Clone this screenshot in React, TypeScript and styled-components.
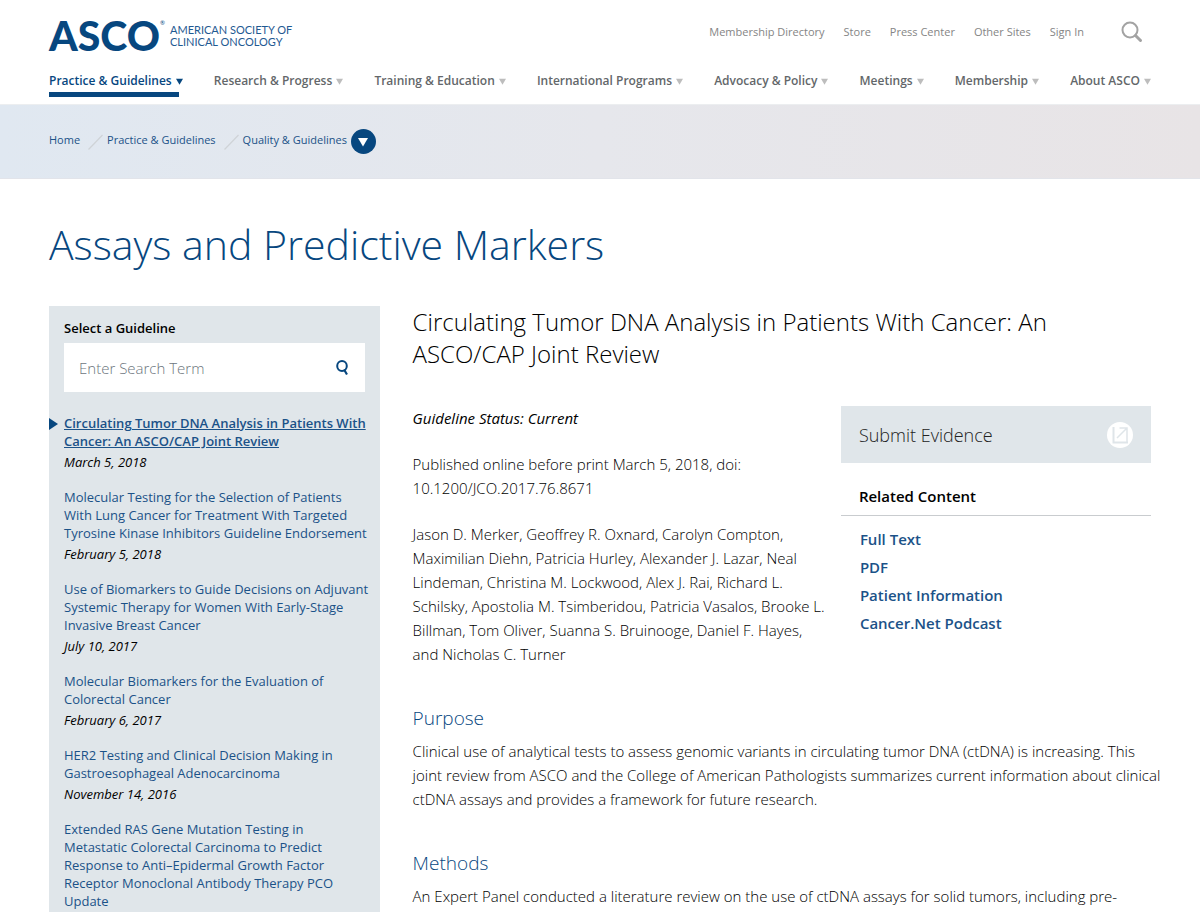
import React from "react";
import styled, { createGlobalStyle } from "styled-components";

const navy = "#07477f";
const link = "#1b5288";

const GlobalStyle = createGlobalStyle`
  *, *::before, *::after { box-sizing: border-box; }
  body {
    margin: 0;
    background: #fff;
    color: #000;
    font-family: "Open Sans", "Noto Sans", sans-serif;
  }
  h1, h2, h3, p, ul, ol { margin: 0; padding: 0; font-weight: 300; }
  ul, ol { list-style: none; }
  a { text-decoration: none; color: inherit; }
  button { border: 0; padding: 0; background: none; font: inherit; cursor: pointer; }
`;

const Header = styled.header`
  padding: 16px 49px 7px;
  border-bottom: 1px solid #eceef0;
`;

const TopRow = styled.div`
  display: flex;
  justify-content: space-between;
  align-items: flex-start;
`;

const Logo = styled.a`
  display: flex;
  align-items: center;
  gap: 5px;
  height: 40px;
  color: ${navy};
  font-family: Lato, "Open Sans", sans-serif;
`;

const LogoMark = styled.span`
  display: flex;
  align-items: flex-start;
  font-size: 41px;
  line-height: 40px;
  font-weight: 900;
`;

const Registered = styled.sup`
  font-size: 6px;
  line-height: 14px;
  font-weight: 400;
`;

const LogoName = styled.span`
  font-size: 11px;
  line-height: 12px;
  color: #1f5a92;
`;

const Utility = styled.nav`
  display: flex;
  align-items: center;
  gap: 19px;
  height: 32px;
  padding-right: 8px;
  font-size: 11px;
  line-height: 16px;
  color: #858585;
`;

const SearchToggle = styled.button`
  display: flex;
  margin-left: 18px;
  color: #a3a3a3;
`;

const MainNav = styled.ul`
  display: flex;
  justify-content: space-between;
  margin-top: 16px;
  font-size: 12px;
  line-height: 18px;
  font-weight: 600;
`;

const NavLink = styled.a<{ $active?: boolean }>`
  display: flex;
  align-items: center;
  gap: 4px;
  height: 25px;
  padding-bottom: 7px;
  color: ${(p) => (p.$active ? navy : "#63676a")};
  background: ${(p) =>
    p.$active ? `linear-gradient(${navy}, ${navy}) left bottom / calc(100% - 4px) 5px no-repeat` : "none"};
  svg { color: ${(p) => (p.$active ? navy : "#bdbdbd")}; }
`;

const CrumbBar = styled.nav`
  display: flex;
  align-items: center;
  height: 74px;
  padding: 0 49px;
  background: linear-gradient(90deg, #e0e8f1, #e6e7ec 50%, #e8e4e6);
  border-bottom: 1px solid #e2e4ea;
  font-size: 11px;
  line-height: 16px;
  color: ${link};
`;

const CrumbLink = styled.a`
  padding-bottom: 3px;
`;

const CrumbSlash = styled.svg`
  margin: 0 4px 0 8px;
  color: #cfd3d7;
`;

const CrumbMenu = styled.button`
  display: flex;
  align-items: center;
  justify-content: center;
  width: 25px;
  height: 25px;
  margin-left: 4px;
  border-radius: 50%;
  background: ${navy};
  color: #fff;
`;

const Page = styled.main`
  padding: 0 49px;
`;

const Title = styled.h1`
  padding: 40px 0 36px;
  font-size: 41px;
  line-height: 51px;
  color: ${navy};
`;

const Columns = styled.div`
  display: flex;
  align-items: flex-start;
  gap: 33px;
`;

const Sidebar = styled.section`
  flex: 0 0 30%;
  padding: 13px 0 24px;
  background: #e0e6ea;
`;

const SidebarLabel = styled.label`
  display: block;
  padding: 0 15px;
  font-size: 13px;
  line-height: 18px;
  font-weight: 600;
`;

const SearchForm = styled.form`
  display: flex;
  align-items: center;
  height: 49px;
  margin: 6px 15px 22px;
  padding: 0 16px 0 15px;
  background: #fff;
`;

const SearchInput = styled.input`
  flex: 1;
  min-width: 0;
  border: 0;
  outline: 0;
  padding: 0;
  font: 300 15px/22px "Open Sans", "Noto Sans", sans-serif;
  &::placeholder { color: #6c757d; opacity: 1; }
`;

const IconButton = styled.button`
  display: flex;
  color: ${navy};
`;

const GuidelineList = styled.ul`
  padding: 0 10px 0 15px;
`;

const GuidelineItem = styled.li<{ $current?: boolean }>`
  position: relative;
  margin-bottom: 17px;
  font-size: 13px;
  line-height: 18px;
  color: ${link};
  a {
    font-weight: ${(p) => (p.$current ? 600 : 400)};
    text-decoration: ${(p) => (p.$current ? "underline" : "none")};
  }
`;

const CurrentMarker = styled.svg`
  position: absolute;
  left: -15px;
  top: 4px;
  color: ${navy};
`;

const GuidelineDate = styled.p`
  padding-top: 3px;
  font-size: 13px;
  line-height: 18px;
  font-weight: 400;
  font-style: italic;
  color: #000;
`;

const Article = styled.article`
  flex: 1;
  min-width: 0;
`;

const ArticleTitle = styled.h2`
  margin-bottom: 36px;
  font-size: 24px;
  line-height: 32px;
`;

const Intro = styled.div`
  display: flex;
  align-items: flex-start;
  gap: 12px;
`;

const IntroText = styled.div`
  flex: 1;
  min-width: 0;
`;

const Text = styled.p`
  margin-bottom: 22px;
  font-size: 15px;
  line-height: 24px;
  color: #000;
`;

const WideText = styled(Text)`
  margin-right: -12px;
`;

const Status = styled(Text)`
  font-weight: 400;
  font-style: italic;
`;

const Aside = styled.aside`
  flex: 0 0 42%;
`;

const Submit = styled.a`
  display: flex;
  align-items: center;
  justify-content: space-between;
  height: 57px;
  padding: 0 18px;
  background: #e0e6ea;
  font-size: 18px;
  line-height: 24px;
  font-weight: 300;
  color: #222;
`;

const RelatedTitle = styled.h3`
  padding: 22px 18px 8px;
  border-bottom: 1px solid #c9cccf;
  font-size: 15px;
  line-height: 22px;
  font-weight: 600;
`;

const RelatedList = styled.ul`
  padding: 9px 19px;
  font-size: 15px;
  line-height: 28px;
  font-weight: 600;
  color: ${link};
`;

const SectionTitle = styled.h3`
  padding: 17px 0 8px;
  font-size: 19px;
  line-height: 26px;
  color: ${navy};
`;

const Caret = ({ size = 7 }: { size?: number }) => (
  <svg width={size} height={size} viewBox="0 0 10 10" aria-hidden="true">
    <path d="M0 1h10L5 9.500z" fill="currentColor" />
  </svg>
);

const utilityLinks = ["Membership Directory", "Store", "Press Center", "Other Sites", "Sign In"];

const navLinks = [
  "Practice & Guidelines",
  "Research & Progress",
  "Training & Education",
  "International Programs",
  "Advocacy & Policy",
  "Meetings",
  "Membership",
  "About ASCO",
];

const crumbs = ["Home", "Practice & Guidelines", "Quality & Guidelines"];

const guidelines = [
  { title: "Circulating Tumor DNA Analysis in Patients With Cancer: An ASCO/CAP Joint Review", date: "March 5, 2018" },
  {
    title:
      "Molecular Testing for the Selection of Patients With Lung Cancer for Treatment With Targeted Tyrosine Kinase Inhibitors Guideline Endorsement",
    date: "February 5, 2018",
  },
  {
    title:
      "Use of Biomarkers to Guide Decisions on Adjuvant Systemic Therapy for Women With Early-Stage Invasive Breast Cancer",
    date: "July 10, 2017",
  },
  { title: "Molecular Biomarkers for the Evaluation of Colorectal Cancer", date: "February 6, 2017" },
  { title: "HER2 Testing and Clinical Decision Making in Gastroesophageal Adenocarcinoma", date: "November 14, 2016" },
  {
    title:
      "Extended RAS Gene Mutation Testing in Metastatic Colorectal Carcinoma to Predict Response to Anti–Epidermal Growth Factor Receptor Monoclonal Antibody Therapy PCO Update",
  },
];

const related = ["Full Text", "PDF", "Patient Information", "Cancer.Net Podcast"];

export default function App() {
  return (
    <>
      <GlobalStyle />
      <Header>
        <TopRow>
          <Logo href="#">
            <LogoMark>
              ASCO<Registered>®</Registered>
            </LogoMark>
            <LogoName>
              AMERICAN SOCIETY OF
              <br />
              CLINICAL ONCOLOGY
            </LogoName>
          </Logo>
          <Utility aria-label="Utility">
            {utilityLinks.map((label) => (
              <a href="#" key={label}>{label}</a>
            ))}
            <SearchToggle type="button" aria-label="Search">
              <svg width="22" height="22" viewBox="0 0 22 22" fill="none" stroke="currentColor">
                <circle cx="9" cy="9" r="7.500" strokeWidth="2" />
                <path d="M14.500 14.500L19.500 19.500" strokeWidth="3" strokeLinecap="round" />
              </svg>
            </SearchToggle>
          </Utility>
        </TopRow>
        <nav aria-label="Main">
          <MainNav>
            {navLinks.map((label, i) => (
              <li key={label}>
                <NavLink href="#" $active={i === 0}>
                  {label}
                  <Caret />
                </NavLink>
              </li>
            ))}
          </MainNav>
        </nav>
      </Header>

      <CrumbBar aria-label="Breadcrumb">
        {crumbs.map((label, i) => (
          <React.Fragment key={label}>
            {i > 0 && (
              <CrumbSlash width="15" height="16" viewBox="0 0 15 16" fill="none" aria-hidden="true">
                <path d="M0.500 15.500L14.500 1" stroke="currentColor" strokeWidth="1.200" />
              </CrumbSlash>
            )}
            <CrumbLink href="#">{label}</CrumbLink>
          </React.Fragment>
        ))}
        <CrumbMenu type="button" aria-label="More in this section">
          <Caret size={10} />
        </CrumbMenu>
      </CrumbBar>

      <Page>
        <Title>Assays and Predictive Markers</Title>
        <Columns>
          <Sidebar>
            <SidebarLabel htmlFor="guideline-search">Select a Guideline</SidebarLabel>
            <SearchForm onSubmit={(e) => e.preventDefault()}>
              <SearchInput id="guideline-search" type="text" placeholder="Enter Search Term" />
              <IconButton type="submit" aria-label="Search guidelines">
                <svg width="14" height="16" viewBox="0 0 14 16" fill="none" stroke="currentColor" strokeWidth="2">
                  <ellipse cx="7" cy="6" rx="4.800" ry="5" />
                  <path d="M9 9.500L12 14.500" strokeWidth="2.200" />
                </svg>
              </IconButton>
            </SearchForm>
            <GuidelineList>
              {guidelines.map((g, i) => (
                <GuidelineItem key={g.title} $current={i === 0}>
                  {i === 0 && (
                    <CurrentMarker width="9" height="12" viewBox="0 0 9 12" aria-hidden="true">
                      <path d="M0 0L9 6L0 12z" fill="currentColor" />
                    </CurrentMarker>
                  )}
                  <a href="#">{g.title}</a>
                  {g.date && <GuidelineDate>{g.date}</GuidelineDate>}
                </GuidelineItem>
              ))}
            </GuidelineList>
          </Sidebar>

          <Article>
            <ArticleTitle>
              Circulating Tumor DNA Analysis in Patients With Cancer: An ASCO/CAP Joint Review
            </ArticleTitle>
            <Intro>
              <IntroText>
                <Status>Guideline Status: Current</Status>
                <Text>Published online before print March 5, 2018, doi: 10.1200/JCO.2017.76.8671</Text>
                <Text>
                  Jason D. Merker, Geoffrey R. Oxnard, Carolyn Compton, Maximilian Diehn, Patricia Hurley,
                  Alexander J. Lazar, Neal Lindeman, Christina M. Lockwood, Alex J. Rai, Richard L. Schilsky,
                  Apostolia M. Tsimberidou, Patricia Vasalos, Brooke L. Billman, Tom Oliver, Suanna S. Bruinooge,
                  Daniel F. Hayes, and Nicholas C. Turner
                </Text>
              </IntroText>
              <Aside>
                <Submit href="#">
                  Submit Evidence
                  <svg width="26" height="26" viewBox="0 0 26 26" fill="none" aria-hidden="true">
                    <circle cx="13" cy="13" r="13" fill="#fff" />
                    <path d="M6.500 5V20.500H21" stroke="#dfe5e9" strokeWidth="2" />
                    <path d="M10 16L19.500 6.500M12.500 6H20V20" stroke="#dfe5e9" strokeWidth="1.500" />
                  </svg>
                </Submit>
                <RelatedTitle>Related Content</RelatedTitle>
                <RelatedList>
                  {related.map((label) => (
                    <li key={label}>
                      <a href="#">{label}</a>
                    </li>
                  ))}
                </RelatedList>
              </Aside>
            </Intro>
            <SectionTitle>Purpose</SectionTitle>
            <WideText>
              Clinical use of analytical tests to assess genomic variants in circulating tumor DNA (ctDNA) is
              increasing. This joint review from ASCO and the College of American Pathologists summarizes current
              information about clinical ctDNA assays and provides a framework for future research.
            </WideText>
            <SectionTitle>Methods</SectionTitle>
            <WideText>
              An Expert Panel conducted a literature review on the use of ctDNA assays for solid tumors, including pre-
            </WideText>
          </Article>
        </Columns>
      </Page>
    </>
  );
}
